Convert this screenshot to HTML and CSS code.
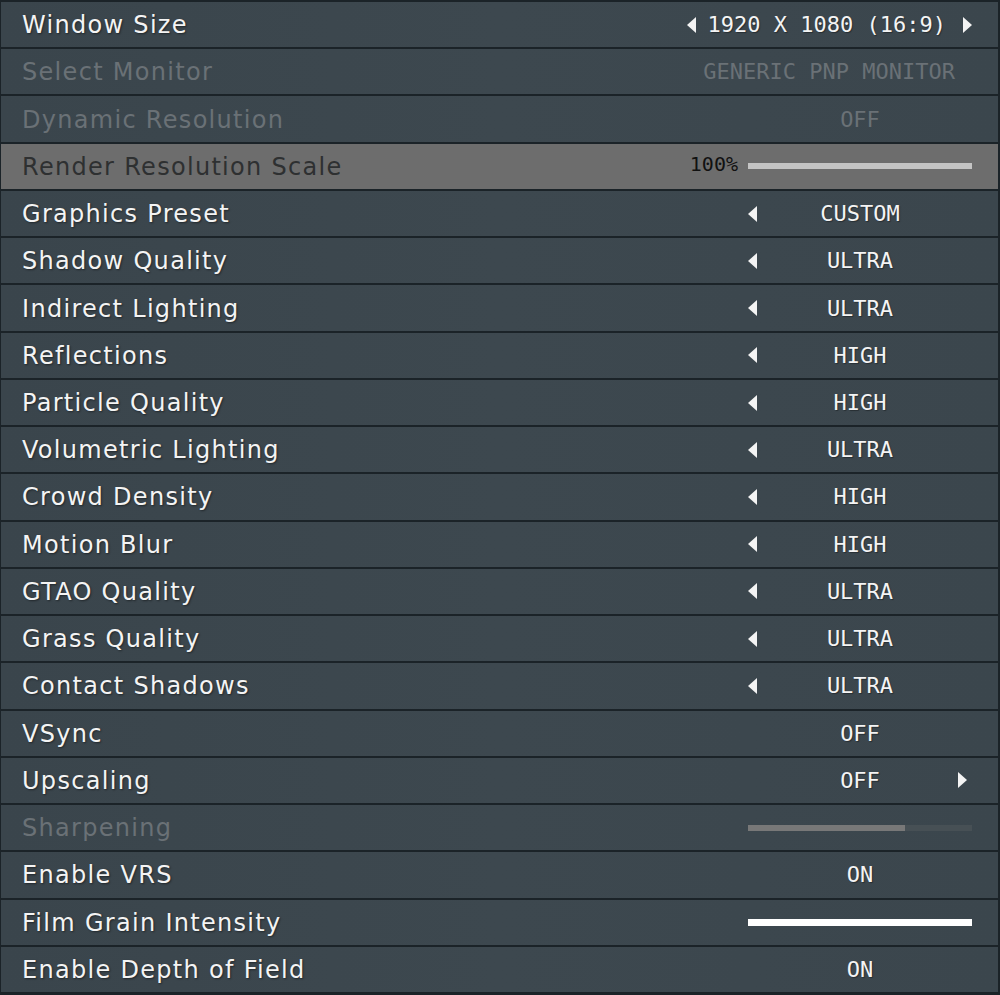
FILE: index.html
```html
<!DOCTYPE html>
<html>
<head>
<meta charset="utf-8">
<link rel="stylesheet" href="styles.css">
</head>
<body>
<div class="list">
  <div class="row">
    <span class="label">Window Size</span>
    <div class="ctrl wide">
      <svg class="arrow" viewBox="0 0 9 16"><path d="M9 0 L9 16 L0 8 Z"/></svg>
      <span class="val">1920 X 1080 (16:9)</span>
      <svg class="arrow" viewBox="0 0 9 16"><path d="M0 0 L0 16 L9 8 Z"/></svg>
    </div>
  </div>
  <div class="row disabled">
    <span class="label">Select Monitor</span>
    <div class="ctrl end"><span class="val">GENERIC PNP MONITOR</span></div>
  </div>
  <div class="row disabled">
    <span class="label">Dynamic Resolution</span>
    <div class="ctrl"><span></span><span class="val">OFF</span><span></span></div>
  </div>
  <div class="row selected">
    <span class="label">Render Resolution Scale</span>
    <div class="ctrl-slider">
      <span class="pct">100%</span>
      <div class="bar light"><div class="fill" style="width:100%"></div></div>
    </div>
  </div>
  <div class="row">
    <span class="label">Graphics Preset</span>
    <div class="ctrl"><svg class="arrow" viewBox="0 0 9 16"><path d="M9 0 L9 16 L0 8 Z"/></svg><span class="val">CUSTOM</span><span></span></div>
  </div>
  <div class="row">
    <span class="label">Shadow Quality</span>
    <div class="ctrl"><svg class="arrow" viewBox="0 0 9 16"><path d="M9 0 L9 16 L0 8 Z"/></svg><span class="val">ULTRA</span><span></span></div>
  </div>
  <div class="row">
    <span class="label">Indirect Lighting</span>
    <div class="ctrl"><svg class="arrow" viewBox="0 0 9 16"><path d="M9 0 L9 16 L0 8 Z"/></svg><span class="val">ULTRA</span><span></span></div>
  </div>
  <div class="row">
    <span class="label">Reflections</span>
    <div class="ctrl"><svg class="arrow" viewBox="0 0 9 16"><path d="M9 0 L9 16 L0 8 Z"/></svg><span class="val">HIGH</span><span></span></div>
  </div>
  <div class="row">
    <span class="label">Particle Quality</span>
    <div class="ctrl"><svg class="arrow" viewBox="0 0 9 16"><path d="M9 0 L9 16 L0 8 Z"/></svg><span class="val">HIGH</span><span></span></div>
  </div>
  <div class="row">
    <span class="label">Volumetric Lighting</span>
    <div class="ctrl"><svg class="arrow" viewBox="0 0 9 16"><path d="M9 0 L9 16 L0 8 Z"/></svg><span class="val">ULTRA</span><span></span></div>
  </div>
  <div class="row">
    <span class="label">Crowd Density</span>
    <div class="ctrl"><svg class="arrow" viewBox="0 0 9 16"><path d="M9 0 L9 16 L0 8 Z"/></svg><span class="val">HIGH</span><span></span></div>
  </div>
  <div class="row">
    <span class="label">Motion Blur</span>
    <div class="ctrl"><svg class="arrow" viewBox="0 0 9 16"><path d="M9 0 L9 16 L0 8 Z"/></svg><span class="val">HIGH</span><span></span></div>
  </div>
  <div class="row">
    <span class="label">GTAO Quality</span>
    <div class="ctrl"><svg class="arrow" viewBox="0 0 9 16"><path d="M9 0 L9 16 L0 8 Z"/></svg><span class="val">ULTRA</span><span></span></div>
  </div>
  <div class="row">
    <span class="label">Grass Quality</span>
    <div class="ctrl"><svg class="arrow" viewBox="0 0 9 16"><path d="M9 0 L9 16 L0 8 Z"/></svg><span class="val">ULTRA</span><span></span></div>
  </div>
  <div class="row">
    <span class="label">Contact Shadows</span>
    <div class="ctrl"><svg class="arrow" viewBox="0 0 9 16"><path d="M9 0 L9 16 L0 8 Z"/></svg><span class="val">ULTRA</span><span></span></div>
  </div>
  <div class="row">
    <span class="label">VSync</span>
    <div class="ctrl"><span></span><span class="val">OFF</span><span></span></div>
  </div>
  <div class="row">
    <span class="label">Upscaling</span>
    <div class="ctrl"><span></span><span class="val">OFF</span><svg class="arrow" viewBox="0 0 9 16"><path d="M0 0 L0 16 L9 8 Z"/></svg></div>
  </div>
  <div class="row disabled">
    <span class="label">Sharpening</span>
    <div class="ctrl-slider">
      <div class="bar dim"><div class="fill" style="width:70%"></div></div>
    </div>
  </div>
  <div class="row">
    <span class="label">Enable VRS</span>
    <div class="ctrl"><span></span><span class="val">ON</span><span></span></div>
  </div>
  <div class="row">
    <span class="label">Film Grain Intensity</span>
    <div class="ctrl-slider">
      <div class="bar white"><div class="fill" style="width:100%"></div></div>
    </div>
  </div>
  <div class="row">
    <span class="label">Enable Depth of Field</span>
    <div class="ctrl"><span></span><span class="val">ON</span><span></span></div>
  </div>
</div>
</body>
</html>
```

FILE: styles.css
```css
* { box-sizing: border-box; }
html, body { margin: 0; padding: 0; background: #1b2328; }
.list {
  width: 1000px;
  height: 995px;
  display: grid;
  grid-template-rows: repeat(21, 1fr);
  row-gap: 2px;
  padding: 2px 2px 3px 1px;
  background: #1b2328;
}
.row {
  display: flex;
  align-items: center;
  padding: 0 26px 0 21px;
  background: linear-gradient(90deg, #3a454c 0%, #3d484f 50%, #3b464d 100%);
  color: #f4f4f4;
}
.label {
  flex: 1;
  font-family: "DejaVu Sans", "Open Sans", sans-serif;
  font-size: 24px;
  font-weight: 400;
  letter-spacing: 1.3px;
  text-shadow: 1px 1px 2px rgba(0,0,0,0.45);
  margin-top: 1px;
}
.row.disabled { color: #6a7176; }
.row.disabled .label { text-shadow: none; }
.row.selected { background: #6d6d6d; color: #2e3031; }
.row.selected .label { text-shadow: none; }
.ctrl {
  width: 224px;
  display: grid;
  grid-template-columns: 14px minmax(0, 1fr) 14px;
  align-items: center;
}
.ctrl.end {
  display: flex;
  justify-content: flex-end;
  padding-right: 17px;
}
.ctrl.wide {
  width: 290px;
  display: flex;
  justify-content: flex-end;
}
.ctrl.wide .val { margin: 0 17px 0 12px; }
.val {
  font-family: "DejaVu Sans Mono", "Liberation Mono", monospace;
  font-size: 22px;
  text-align: center;
  white-space: nowrap;
  text-shadow: 1px 1px 1px rgba(0,0,0,0.35);
}
.row.disabled .val { text-shadow: none; }
.arrow { width: 9px; height: 16px; fill: #f4f4f4; display: block; }
.ctrl-slider {
  display: flex;
  align-items: center;
  gap: 10px;
}
.pct {
  font-family: "DejaVu Sans Mono", "Liberation Mono", monospace;
  font-size: 20px;
  color: #111;
  margin-top: -4px;
}
.bar { width: 224px; height: 6px; }
.bar .fill { height: 100%; }
.bar.light { background: #c4c4c4; }
.bar.light .fill { background: #c4c4c4; }
.bar.dim { background: #475055; }
.bar.dim .fill { background: #787878; }
.bar.white { background: #ffffff; height: 7px; }
.bar.white .fill { background: #ffffff; }
```
